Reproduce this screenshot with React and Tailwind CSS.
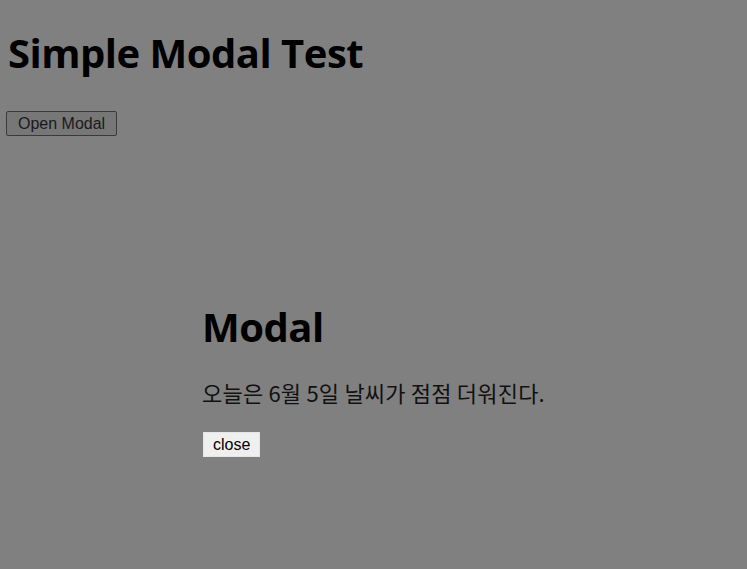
import React from "react";

export default function App() {
  return (
    <div className="relative w-full min-h-[569px] h-screen bg-[#808080] overflow-hidden">
      <div className="flex flex-col items-start pl-[8px] pt-[33px]">
        <h1 className="m-0 text-[40px] leading-[40px] font-bold tracking-[-0.5px] text-black [font-family:'Open_Sans','Noto_Sans_CJK_KR',sans-serif]">
          Simple Modal Test
        </h1>
        <button className="mt-[38px] ml-[-2px] h-[25px] px-[11px] border border-[#3a3a3a] rounded-[2px] bg-[#777777] text-[#1a1a1a] text-[16px] leading-[18px] [font-family:'Liberation_Sans',Arial,sans-serif]">
          Open Modal
        </button>
      </div>
      <div className="absolute left-[202px] top-[307px] flex flex-col items-start">
        <h1 className="m-0 text-[40px] leading-[40px] font-bold tracking-[-0.5px] text-black [font-family:'Open_Sans','Noto_Sans_CJK_KR',sans-serif]">
          Modal
        </h1>
        <p className="mt-[33px] text-[22px] leading-[24px] tracking-[0.2px] text-[#111] [font-family:'Noto_Sans_CJK_KR',sans-serif]">
          오늘은 6월 5일 날씨가 점점 더워진다.
        </p>
        <button className="mt-[28px] ml-[1px] h-[25px] px-[9px] bg-[#efefef] border border-[#e6e6e6] text-black text-[16px] leading-[18px] [font-family:'Liberation_Sans',Arial,sans-serif]">
          close
        </button>
      </div>
    </div>
  );
}
